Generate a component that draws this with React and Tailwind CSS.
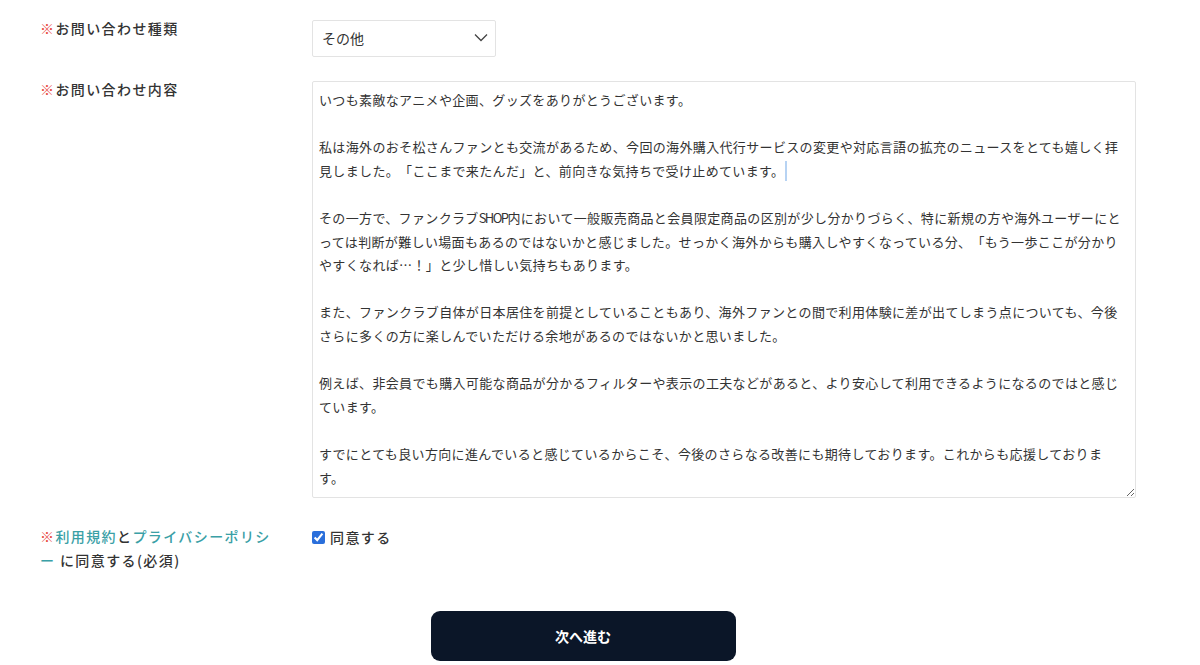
import React from 'react';

const FONT = { fontFamily: '"Noto Sans CJK JP", "Noto Sans", sans-serif' };

const P1 = 'いつも素敵なアニメや企画、グッズをありがとうございます。';
const P2 = '私は海外のおそ松さんファンとも交流があるため、今回の海外購入代行サービスの変更や対応言語の拡充のニュースをとても嬉しく拝見しました。「ここまで来たんだ」と、前向きな気持ちで受け止めています。';
const P3a = 'その一方で、ファンクラブ';
const P3b = '内において一般販売商品と会員限定商品の区別が少し分かりづらく、特に新規の方や海外ユーザーにとっては判断が難しい場面もあるのではないかと感じました。せっかく海外からも購入しやすくなっている分、「もう一歩ここが分かりやすくなれば…！」と少し惜しい気持ちもあります。';
const P4 = 'また、ファンクラブ自体が日本居住を前提としていることもあり、海外ファンとの間で利用体験に差が出てしまう点についても、今後さらに多くの方に楽しんでいただける余地があるのではないかと思いました。';
const P5 = '例えば、非会員でも購入可能な商品が分かるフィルターや表示の工夫などがあると、より安心して利用できるようになるのではと感じています。';
const P6 = 'すでにとても良い方向に進んでいると感じているからこそ、今後のさらなる改善にも期待しております。これからも応援しております。';

// Required mark
const Req = () => <span className="text-[#e8483f]">※</span>;

const Row = ({ label, children, className = '' }) => (
    <div className={`flex ${className}`}>
        <div className="w-[272px] shrink-0 pr-[30px] text-[14px] leading-[24px] font-medium tracking-[1.4px] text-[#333] [text-spacing-trim:space-all]">
            {label}
        </div>
        <div className="flex-1">{children}</div>
    </div>
);

export default function App() {
    return (
        <div className="min-h-[665px] bg-white" style={FONT}>
            <div className="w-[1096px] ml-[40px] pt-[16px]">
                <Row label={<><Req />お問い合わせ種類</>}>
                    <div className="relative w-[184px] mt-[4px]">
                        <select
                            defaultValue="その他"
                            className="w-full h-[37px] appearance-none border border-[#e3e3e3] rounded-[2px] bg-white pl-[9px] text-[14px] text-[#333] outline-none"
                            style={FONT}
                        >
                            <option>その他</option>
                        </select>
                        <svg
                            className="absolute right-[8px] top-[13px] pointer-events-none"
                            width="14" height="9" viewBox="0 0 14 9" fill="none"
                        >
                            <path d="M1 1.5l6 6 6-6" stroke="#444" strokeWidth="1.3" />
                        </svg>
                    </div>
                </Row>

                <Row label={<><Req />お問い合わせ内容</>} className="mt-[20px]">
                    <div className="relative mt-[4px]">
                        {/* message box, styled as a resizable textarea */}
                        <div className="h-[417px] overflow-hidden resize-y border border-[#e3e3e3] rounded-[2px] pl-[6px] pr-[13px] pt-[6px] text-[13px] leading-[23.6px] tracking-[0.35px] text-[#333] whitespace-pre-wrap [text-spacing-trim:space-all]">
                            {P1}{'\n\n'}
                            {P2}{'\n\n'}
                            {P3a}<span className="tracking-[-1.6px]">SHOP</span>{P3b}{'\n\n'}
                            {P4}{'\n\n'}
                            {P5}{'\n\n'}
                            {P6}
                        </div>
                        {/* text caret */}
                        <span className="absolute left-[473px] top-[80px] w-[2px] h-[20px] bg-[#b7d3f3]" />
                    </div>
                </Row>

                <Row
                    className="mt-[26px]"
                    label={
                        <>
                            <Req />
                            <span className="text-[#3aa0a6]">利用規約</span>と
                            <span className="text-[#3aa0a6]">プライバシーポリシー</span> に同意する(必須)
                        </>
                    }
                >
                    <label className="flex items-center gap-[5px] pt-[3px] text-[14px] tracking-[1.4px] text-[#333] font-medium">
                        <input type="checkbox" defaultChecked className="w-[13px] h-[13px] accent-[#2a6fdb]" />
                        同意する
                    </label>
                </Row>

                <div className="flex justify-center mt-[39px] pr-[10px]">
                    <button className="w-[305px] h-[50px] rounded-[9px] bg-[#0b1628] text-white text-[14px] font-bold">
                        次へ進む
                    </button>
                </div>
            </div>
        </div>
    );
}
